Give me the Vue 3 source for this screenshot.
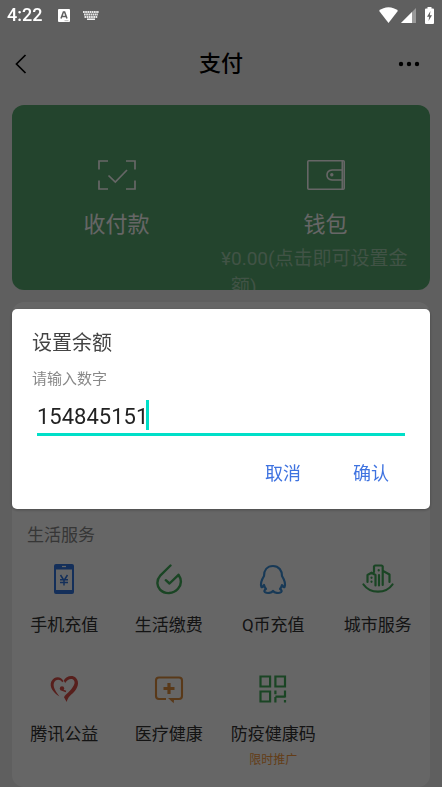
<script setup>
import { ref } from 'vue'

const amount = ref('154845151')

const services = [
  { id: 'phone', label: '手机充值' },
  { id: 'bills', label: '生活缴费' },
  { id: 'qcoin', label: 'Q币充值' },
  { id: 'city', label: '城市服务' },
  { id: 'charity', label: '腾讯公益' },
  { id: 'medical', label: '医疗健康' },
  { id: 'code', label: '防疫健康码', note: '限时推广' },
]
</script>

<template>
  <div class="screen">
    <div class="status">
      <span class="clock">4:22</span>
      <svg class="ime" width="12" height="13" viewBox="0 0 12 13" aria-hidden="true">
        <rect width="12" height="13" rx="1" fill="#fff" />
        <path d="M3 9.500 5.400 3h1.200L9 9.500M4 7.500h4" fill="none" stroke="#5f5f5f" stroke-width="1.500" />
        <path d="M6.500 11.700h4" stroke="#bbb" stroke-width="1" />
      </svg>
      <svg class="keys" width="16" height="9" viewBox="0 0 16 9" aria-hidden="true">
        <path d="M0 1h16M1 3.500h14M1.500 6h13" stroke="#e8e8e8" stroke-width="1.900" stroke-dasharray="1.700 .5" />
        <path d="M4 8.200h8" stroke="#fff" stroke-width="1.400" />
      </svg>
      <span class="spacer"></span>
      <svg width="19" height="16" viewBox="0 0 19 16" aria-hidden="true">
        <path d="M0 3.800C5.300-1.100 13.700-1.100 19 3.800L9.500 16Z" fill="#fff" />
      </svg>
      <svg class="signal" width="15" height="15" viewBox="0 0 15 15" aria-hidden="true">
        <path d="M15 0v15H0Z" fill="#999" />
        <path d="M11 4v11H0Z" fill="#fff" />
      </svg>
      <svg class="battery" width="9" height="17" viewBox="0 0 9 17" aria-hidden="true">
        <path d="M2.500 0h4v1.500H8q1 0 1 1V16q0 1-1 1H1q-1 0-1-1V2.500q0-1 1-1h1.500Z" fill="#fff" />
        <path d="M5.500 4 2 9.700h2.200L3.500 14 7 8.300H4.800Z" fill="#5f5f5f" />
      </svg>
    </div>

    <header class="bar">
      <button class="icon-button" type="button" aria-label="返回">
        <svg width="12" height="20" viewBox="0 0 12 20"><path d="M10.500 1 1.500 10l9 9" fill="none" stroke="#000" stroke-width="1.700" /></svg>
      </button>
      <h1>支付</h1>
      <button class="icon-button more" type="button" aria-label="更多">
        <svg width="22" height="6" viewBox="0 0 22 6"><circle cx="3" cy="3" r="2.200" /><circle cx="11" cy="3" r="2.200" /><circle cx="19" cy="3" r="2.200" /></svg>
      </button>
    </header>

    <main>
      <section class="pay">
        <button class="pay-item" type="button">
          <svg width="38" height="30" viewBox="0 0 38 30" fill="none" stroke="currentColor" stroke-width="1.700">
            <path d="M1 9.500V1h9M28 1h9v8.500M1 20.500V29h9M28 29h9v-8.500" />
            <path d="m10.500 15.500 6.800 6.500L29 10" />
          </svg>
          <span class="pay-label">收付款</span>
        </button>
        <button class="pay-item" type="button">
          <svg width="38" height="30" viewBox="0 0 38 30" fill="none" stroke="currentColor" stroke-width="1.600">
            <rect x=".8" y=".8" width="36.400" height="28.400" rx="1" />
            <path d="M35.300 1v28" />
            <path d="M35.300 10H25q-5 .5-5 5t5 5h10.300" />
            <circle cx="24.800" cy="14.800" r="1.700" fill="currentColor" stroke="none" />
          </svg>
          <span class="pay-label">钱包</span>
          <span class="balance"><span>¥</span><span>0.00(点击即可设置金额)</span></span>
        </button>
      </section>

      <section class="services">
        <h2>生活服务</h2>
        <div class="grid">
          <button v-for="s in services" :key="s.id" class="service" type="button">
            <svg v-if="s.id === 'phone'" width="32" height="32" viewBox="0 0 32 32">
              <rect x="6" y="1" width="20" height="30" rx="2" fill="#3277e0" />
              <path d="M8 6.500h16V27H8Z" fill="#fff" />
              <path d="M14 3.500h4" stroke="#fff" stroke-width="1.200" />
              <path d="m12.500 12 3.500 5.500 3.500-5.500M16 17v5.500M12 16.800h8M12 19.600h8" fill="none" stroke="#3277e0" stroke-width="1.500" />
            </svg>
            <svg v-else-if="s.id === 'bills'" width="32" height="32" viewBox="0 0 32 32" fill="none" stroke="#42ac5a" stroke-width="2.400" stroke-linecap="round" stroke-linejoin="round">
              <path d="M17.500 2.500 7.500 12.300C2.500 18 4.500 24 7 26.600c5 5 13.500 4.500 18-.8 3.600-4.300 3.500-9.600.5-14L16.500 20.500l-3.700-3.300" />
            </svg>
            <svg v-else-if="s.id === 'qcoin'" width="32" height="32" viewBox="0 0 32 32" fill="none" stroke="#3d90d8" stroke-width="2.200" stroke-linejoin="round" stroke-linecap="round">
              <path d="M16 3C10 3 7 7.500 7 13c-2.200 3.500-3.800 7.400-2.600 10.800.8 1.200 2-.8 2.600-1.800.3 1.600 1 2.800 2 4-1.600.8-2.200 2.200-1 3.200 2.200 1.500 6.500.8 8-1.200 1.500 2 5.800 2.700 8 1.200 1.200-1 .6-2.400-1-3.200 1-1.200 1.700-2.400 2-4 .6 1 1.800 3 2.600 1.800 1.200-3.400-.4-7.300-2.600-10.800 0-5.500-3-10-9-10Z" />
            </svg>
            <svg v-else-if="s.id === 'city'" width="32" height="32" viewBox="0 0 32 32" fill="none" stroke="#42ac5a" stroke-width="2.200" stroke-linejoin="round" stroke-linecap="round">
              <path d="M5.500 19v-7l4-2.300 4 2.300v10.500M12 9V3.300L13 2.500h6.700l1 .8V22M22 8.500l5.500 3V19" />
              <path d="M1.500 21.500c6.500 9.500 22.500 9.500 29 0" />
              <path d="M16.700 7v.5M17 12v10.500M9.500 14.500v.3M9.500 18.500v.3" />
            </svg>
            <svg v-else-if="s.id === 'charity'" width="32" height="32" viewBox="0 0 32 32">
              <path d="M11.500 24.500C5 20.500 1 14.500 3.300 9.500 6 4 13 3.600 15.500 9.200l-1.300 1C11.500 6.500 7.500 7.500 6 10.700c-1.500 4 2 9.300 5.500 13.800Z" fill="#d94f48" />
              <path d="M15.700 8.500c2-4.300 8.800-6.200 12.300-2.500 4 4.300 1.500 10.700-2.500 14.500-2.500 2.500-5.500 4.300-6.800 9.500l-2.700-4.800c.8-1.800 3-3.500 4.700-5.200 4-4 7.300-8.700 5.300-11.500-2.200-2.700-6.300-1.500-8.800 2.500Z" fill="#d94f48" />
              <circle cx="14" cy="16.500" r="2.200" fill="#d94f48" />
              <path d="m14 18 4 1.500" fill="none" stroke="#d94f48" stroke-width="1.600" />
            </svg>
            <svg v-else-if="s.id === 'medical'" width="32" height="32" viewBox="0 0 32 32" fill="none" stroke="#de8f40" stroke-width="2.100">
              <path d="M13 27H6q-3 0-3-3V8.500q0-3 3-3h20q3 0 3 3V24q0 3-3 3h-5" />
              <path d="M15 26h8.500l-2.500 2-.3 3.300Z" fill="#de8f40" stroke="none" />
              <path d="M16 11v11M10.500 16.500h11" stroke-width="3.200" />
            </svg>
            <svg v-else width="32" height="32" viewBox="0 0 32 32" fill="none" stroke="#42ac5a" stroke-width="2.200">
              <path d="M3.500 4.500h9.600v10H3.500ZM18.400 4.500H28v10h-9.600ZM3.500 19.500h9.600v10H3.500Z" />
              <path d="M18.400 18.500v3.800M18.400 25v5.600M18.400 24.700H28M28 18.500v7M28 28v2.600" />
            </svg>
            <span class="service-label">{{ s.label }}</span>
            <span v-if="s.note" class="note">{{ s.note }}</span>
          </button>
        </div>
      </section>
    </main>

    <div class="scrim">
      <form class="dialog" role="dialog" aria-labelledby="dialog-title" @submit.prevent>
        <h2 id="dialog-title">设置余额</h2>
        <label for="amount">请输入数字</label>
        <div class="field">
          <input id="amount" v-model="amount" type="text" inputmode="numeric" />
          <span class="caret"></span>
        </div>
        <div class="actions">
          <button type="button">取消</button>
          <button type="submit">确认</button>
        </div>
      </form>
    </div>
  </div>
</template>

<style>
body {
  background: #ededed;
}
</style>

<style scoped>
.screen {
  font-family: Roboto, "Noto Sans CJK SC", sans-serif;
  color: #000;
}
.screen * {
  box-sizing: border-box;
}
svg {
  display: block;
  flex: none;
}
h1,
h2 {
  margin: 0;
  font-weight: 400;
}
button {
  border: 0;
  padding: 0;
  background: none;
  font: inherit;
  color: inherit;
}
.status {
  position: relative;
  z-index: 2;
  display: flex;
  align-items: center;
  height: 30px;
  padding: 0 8px 0 7px;
  color: #fff;
}
.clock {
  font-size: 18px;
  font-weight: 500;
  line-height: 30px;
}
.ime {
  margin-left: 16px;
}
.keys {
  margin-left: 13px;
}
.spacer {
  flex: 1;
}
.signal {
  margin-left: 3px;
}
.battery {
  margin-left: 9px;
}
.bar {
  display: grid;
  grid-template-columns: 1fr auto 1fr;
  align-items: center;
  height: 68px;
  padding: 0 15px;
}
.bar h1 {
  font-size: 22px;
  font-weight: 500;
  line-height: 32px;
}
.icon-button {
  display: flex;
}
.more {
  justify-content: flex-end;
  padding-right: 7px;
}
main {
  display: grid;
  gap: 12px;
  padding: 7px 12px 1px;
}
.pay {
  display: grid;
  grid-template-columns: 1fr 1fr;
  height: 185px;
  overflow: hidden;
  border-radius: 12px;
  background: #58aa70;
  color: #fff;
}
.pay-item {
  display: flex;
  flex-direction: column;
  align-items: center;
  justify-content: flex-start;
  padding-top: 55px;
}
.pay-label {
  margin-top: 19px;
  font-size: 22px;
  line-height: 32px;
}
.balance {
  display: flex;
  align-self: stretch;
  padding: 4px 20px 0 0;
  font-size: 19px;
  line-height: 28px;
  text-align: left;
  color: #a2cfae;
}
.services {
  padding: 220px 0 18px;
  border-radius: 12px;
  background: #fff;
}
.services h2 {
  padding-left: 15px;
  font-size: 17px;
  line-height: 26px;
  color: #888;
}
.grid {
  display: grid;
  grid-template-columns: repeat(4, 1fr);
  gap: 15px 0;
  padding-top: 15px;
}
.service {
  display: flex;
  flex-direction: column;
  align-items: center;
  min-height: 94px;
}
.service-label {
  margin-top: 17px;
  font-size: 17px;
  line-height: 26px;
  white-space: nowrap;
  color: #333;
}
.note {
  margin-top: 4px;
  font-size: 12px;
  line-height: 18px;
  color: #f79a3c;
}
.scrim {
  position: fixed;
  inset: 0;
  z-index: 1;
  display: flex;
  align-items: center;
  padding: 30px 12px 0;
  background: rgba(0, 0, 0, 0.6);
}
.dialog {
  flex: 1;
  padding: 19px 25px 21px 20px;
  border-radius: 5px;
  background: #fff;
  box-shadow: 0 1px 3px rgba(0, 0, 0, 0.3);
}
.dialog h2 {
  font-size: 20px;
  line-height: 30px;
  color: #444;
}
.dialog label {
  display: block;
  margin-top: 10px;
  font-size: 15px;
  line-height: 22px;
  color: #888;
}
.field {
  position: relative;
  margin: 8px 0 0 5px;
}
.field input {
  display: block;
  width: 100%;
  height: 38px;
  padding: 2px 0 0;
  border: 0;
  border-bottom: 3px solid #00dfc8;
  border-radius: 0;
  outline: 0;
  background: none;
  font: inherit;
  font-size: 22px;
  color: #222;
}
.caret {
  position: absolute;
  top: 2px;
  left: 109px;
  width: 3px;
  height: 30px;
  background: #00dfc8;
}
.actions {
  display: flex;
  justify-content: flex-end;
  gap: 52px;
  padding: 24px 16px 0 0;
}
.actions button {
  font-size: 18px;
  line-height: 28px;
  color: #3f73e0;
}
</style>
